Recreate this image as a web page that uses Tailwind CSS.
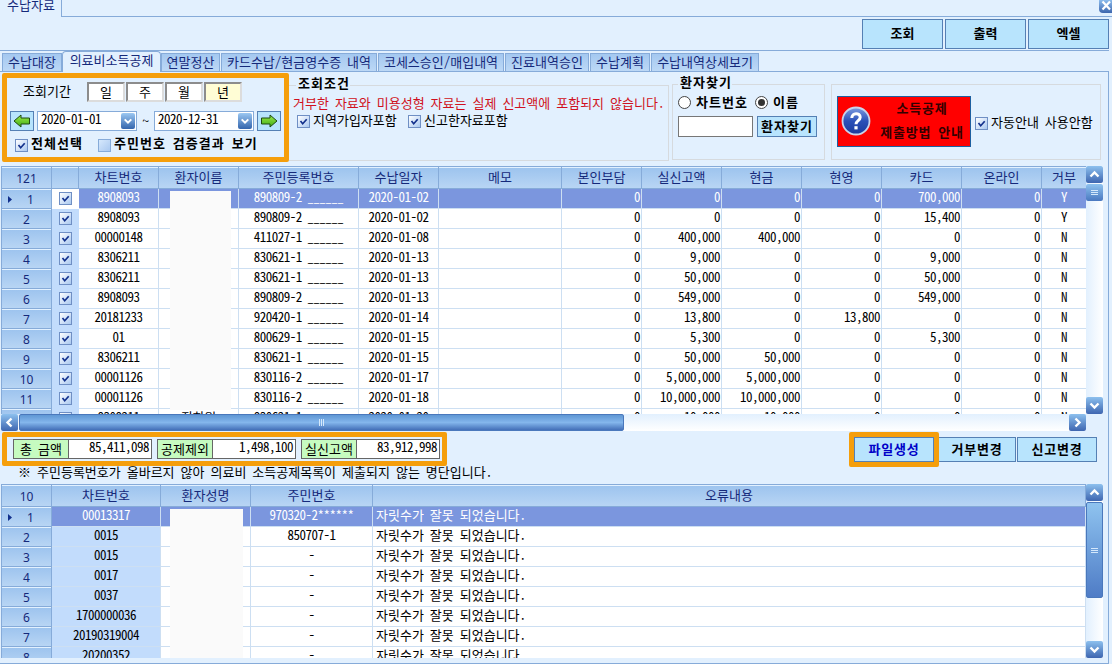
<!DOCTYPE html>
<html lang="ko">
<head>
  <meta charset="UTF-8" />
  <meta name="viewport" content="width=device-width, initial-scale=1.0" />
  <title>수납자료</title>
  <script src="https://cdn.jsdelivr.net/npm/@tailwindcss/browser@4"></script>
</head>
<body class="w-[1112px] h-[664px] overflow-hidden bg-[#e2f0fe] text-black text-[13px] leading-4 whitespace-nowrap [word-spacing:-0.5px] font-['Noto_Sans_CJK_KR',sans-serif] [font-feature-settings:'hwid']">

  <!-- icons -->
  <svg class="absolute w-0 h-0">
    <defs>
      <linearGradient id="arrowFill" x1="0" y1="0" x2="0" y2="1">
        <stop offset="0" stop-color="#9bea4a" /><stop offset="1" stop-color="#3fae12" />
      </linearGradient>
      <linearGradient id="helpFill" x1="0" y1="0" x2="0" y2="1">
        <stop offset="0" stop-color="#7d9ce0" /><stop offset=".5" stop-color="#2b50b8" /><stop offset="1" stop-color="#1b3a9c" />
      </linearGradient>
    </defs>
    <symbol id="check" viewBox="0 0 13 13"><path d="M3.5 6 L5.7 8.7 L9.7 4.3" fill="none" stroke="#12308c" stroke-width="1.7" /></symbol>
    <symbol id="up" viewBox="0 0 17 17"><path d="M4.5 10.5 L8.5 6.5 L12.5 10.5" fill="none" stroke="#fff" stroke-width="2.4" /></symbol>
    <symbol id="down" viewBox="0 0 17 17"><path d="M4.5 6.5 L8.5 10.5 L12.5 6.5" fill="none" stroke="#fff" stroke-width="2.4" /></symbol>
    <symbol id="left" viewBox="0 0 17 17"><path d="M10.5 4.5 L6.5 8.5 L10.5 12.5" fill="none" stroke="#fff" stroke-width="2.4" /></symbol>
    <symbol id="right" viewBox="0 0 17 17"><path d="M6.5 4.5 L10.5 8.5 L6.5 12.5" fill="none" stroke="#fff" stroke-width="2.4" /></symbol>
    <symbol id="arrow" viewBox="0 0 18 14"><path d="M1 7 L8 1 V4 H16.5 V10 H8 V13 Z" fill="url(#arrowFill)" stroke="#1d4a12" /></symbol>
  </svg>

  <!-- window tab -->
  <div class="flex h-[17px] relative">
    <div class="w-[62px] h-[17px] border-r border-[#86abd9] pl-[7px] text-[#15297a]"><div class="-mt-[3px]">수납자료</div></div>
    <div class="flex-1 border-b border-[#86abd9]"></div>
    <div class="absolute left-[1099px] top-0 w-[13px] h-[13px] rounded-bl-sm bg-gradient-to-b from-[#8dbcec] to-[#3e66ae]">
      <svg class="w-[13px] h-[13px]" viewBox="0 0 13 13"><path d="M3.5 1.5 L11 9.5 M11 1.5 L3.5 9.5" stroke="#fff" stroke-width="2.2" /></svg>
    </div>
  </div>

  <!-- toolbar -->
  <div class="flex justify-end gap-[2px] w-[1109px] h-[34px] pt-[2px] border-b border-[#86abd9] font-bold">
    <button class="w-[81px] h-[30px] pb-[2px] border border-[#5580b4] bg-[#b8e4fd]">조회</button>
    <button class="w-[81px] h-[30px] pb-[2px] border border-[#5580b4] bg-[#b8e4fd]">출력</button>
    <button class="w-[81px] h-[30px] pb-[2px] border border-[#5580b4] bg-[#b8e4fd]">엑셀</button>
  </div>

  <!-- page tabs -->
  <div class="flex items-end gap-px w-[1109px] h-[21px] pl-[2px] border-b border-[#86abd9] text-[#15297a]">
    <div class="w-[60px] h-[18px] -mr-px pb-[2px] flex items-center justify-center border border-b-0 border-[#86abd9] bg-gradient-to-b from-[#a4c8f0] to-[#bcd8f6]">수납대장</div>
    <div class="w-[99px] h-[21px] -mb-px -mr-px relative flex items-center justify-center rounded-t border border-b-0 border-[#86abd9] bg-[#e2f0fe] pb-[4px]">의료비소득공제</div>
    <div class="w-[59px] h-[18px] pb-[2px] flex items-center justify-center border border-b-0 border-[#86abd9] bg-gradient-to-b from-[#a4c8f0] to-[#bcd8f6]">연말정산</div>
    <div class="w-[156px] h-[18px] pb-[2px] flex items-center justify-center border border-b-0 border-[#86abd9] bg-gradient-to-b from-[#a4c8f0] to-[#bcd8f6]">카드수납/현금영수증 내역</div>
    <div class="w-[126px] h-[18px] pb-[2px] flex items-center justify-center border border-b-0 border-[#86abd9] bg-gradient-to-b from-[#a4c8f0] to-[#bcd8f6]">코세스승인/매입내역</div>
    <div class="w-[84px] h-[18px] pb-[2px] flex items-center justify-center border border-b-0 border-[#86abd9] bg-gradient-to-b from-[#a4c8f0] to-[#bcd8f6]">진료내역승인</div>
    <div class="w-[60px] h-[18px] pb-[2px] flex items-center justify-center border border-b-0 border-[#86abd9] bg-gradient-to-b from-[#a4c8f0] to-[#bcd8f6]">수납계획</div>
    <div class="w-[108px] h-[18px] pb-[2px] flex items-center justify-center border border-b-0 border-[#86abd9] bg-gradient-to-b from-[#a4c8f0] to-[#bcd8f6]">수납내역상세보기</div>
  </div>

  <div class="w-[1109px] h-[592px] border-r border-b border-[#86abd9]">
    <!-- search filters -->
    <div class="flex h-[94px] pt-px pl-[2px]">
      <div class="w-[287px] h-[89px] border-[5px] border-[#f59e0b] rounded-[2px]">
        <div class="flex items-center h-[28px] pl-4">
          <div class="w-[64px] pb-[2px]">조회기간</div>
          <div class="flex gap-px">
            <div class="w-[38px] h-[20px] flex items-center justify-center bg-white border-2 border-[#dcdcdc] border-t-[#8c8c8c] border-l-[#8c8c8c]">일</div>
            <div class="w-[38px] h-[20px] flex items-center justify-center bg-white border-2 border-[#dcdcdc] border-t-[#8c8c8c] border-l-[#8c8c8c]">주</div>
            <div class="w-[38px] h-[20px] flex items-center justify-center bg-white border-2 border-[#dcdcdc] border-t-[#8c8c8c] border-l-[#8c8c8c]">월</div>
            <div class="w-[38px] h-[20px] flex items-center justify-center bg-[#fffdd5] border-2 border-[#dcdcdc] border-t-[#8c8c8c] border-l-[#8c8c8c]">년</div>
          </div>
        </div>
        <div class="flex items-center h-[20px] mt-[5px] pl-[3px] tracking-[-0.5px]">
          <div class="w-[24px] h-[20px] flex items-center justify-center border border-[#5580b4] bg-[#b8e4fd]"><svg class="w-[18px] h-[14px]"><use href="#arrow" /></svg></div>
          <div class="w-[100px] h-[20px] ml-[3px] flex items-center justify-between border border-[#86abd9] bg-white pl-[3px] pr-px"><span class="-mt-1">2020-01-01</span><span class="w-[14px] h-[16px] rounded-[2px] bg-gradient-to-b from-[#9cc8f2] to-[#3465ac]"><svg class="w-[14px] h-[16px]"><use href="#down" /></svg></span></div>
          <div class="w-[17px] text-center">~</div>
          <div class="w-[100px] h-[20px] flex items-center justify-between border border-[#86abd9] bg-white pl-[3px] pr-px"><span class="-mt-1">2020-12-31</span><span class="w-[14px] h-[16px] rounded-[2px] bg-gradient-to-b from-[#9cc8f2] to-[#3465ac]"><svg class="w-[14px] h-[16px]"><use href="#down" /></svg></span></div>
          <div class="w-[24px] h-[20px] ml-[3px] flex items-center justify-center border border-[#5580b4] bg-[#b8e4fd]"><svg class="w-[18px] h-[14px] -scale-x-100"><use href="#arrow" /></svg></div>
        </div>
        <div class="flex items-center h-[20px] mt-[2px] pl-2 font-bold tracking-[1px]">
          <span class="w-[13px] h-[13px] mt-1 border border-[#6f8fc4] bg-gradient-to-br from-white to-[#a9c8f0]"><svg class="w-[13px] h-[13px] -m-px max-w-none"><use href="#check" /></svg></span>
          <span class="w-[67px] ml-[3px]">전체선택</span>
          <span class="w-[13px] h-[13px] mt-1 border border-[#86abd9] bg-gradient-to-br from-[#d6e8fc] to-[#a9c8f0]"></span>
          <span class="ml-[3px]">주민번호 검증결과 보기</span>
        </div>
      </div>

      <div class="relative w-[380px] h-[76px] mt-[12px] border border-l-0 border-[#d6dade]">
        <div class="absolute left-[7px] -top-[11px] pl-[2px] bg-[#e2f0fe] font-bold tracking-[1px]">조회조건</div>
        <div class="mt-[9px] pl-1 text-[#d01020]">거부한 자료와 미용성형 자료는 실제 신고액에 포함되지 않습니다.</div>
        <div class="flex items-center mt-px pl-2">
          <span class="w-[13px] h-[13px] mt-[2px] border border-[#6f8fc4] bg-gradient-to-br from-white to-[#a9c8f0]"><svg class="w-[13px] h-[13px] -m-px max-w-none"><use href="#check" /></svg></span>
          <span class="w-[95px] ml-[3px]">지역가입자포함</span>
          <span class="w-[13px] h-[13px] mt-[2px] border border-[#6f8fc4] bg-gradient-to-br from-white to-[#a9c8f0]"><svg class="w-[13px] h-[13px] -m-px max-w-none"><use href="#check" /></svg></span>
          <span class="ml-[3px]">신고한자료포함</span>
        </div>
      </div>

      <div class="relative w-[153px] h-[76px] mt-[11px] ml-[3px] border border-[#d6dade] font-bold tracking-[1px]">
        <div class="absolute left-[5px] -top-[11px] pl-[2px] bg-[#e2f0fe]">환자찾기</div>
        <div class="flex items-center mt-[9px] pl-[5px]">
          <span class="w-[13px] h-[13px] rounded-full border border-[#444] bg-white"></span>
          <span class="w-[59px] ml-[5px]">차트번호</span>
          <span class="w-[13px] h-[13px] rounded-full border border-[#444] bg-white flex items-center justify-center"><span class="w-[7px] h-[7px] rounded-full bg-[#333]"></span></span>
          <span class="ml-[5px]">이름</span>
        </div>
        <div class="flex gap-1 mt-[6px] pl-[5px]">
          <div class="w-[75px] h-[21px] border border-[#777] bg-white"></div>
          <button class="w-[60px] h-[21px] pb-px border border-[#5580b4] bg-[#b8e4fd] flex items-center justify-center">환자찾기</button>
        </div>
      </div>

      <div class="flex items-center w-[270px] h-[76px] mt-[11px] ml-[6px] pl-[5px] border border-[#d6dade]">
        <div class="flex items-center w-[134px] h-[51px] -mt-[2px] border border-[#1d5fa0] bg-[#f00] pl-[3px]">
          <svg class="w-[30px] h-[30px] shrink-0" viewBox="0 0 30 30">
            <circle cx="15" cy="15" r="13.5" fill="url(#helpFill)" stroke="#c9d3ea" stroke-width="1.8" />
            <path d="M10.8 12 C10.8 6.3 19.2 6.3 19.2 11.3 C19.2 14.6 15 14.6 15 18.2" fill="none" stroke="#fff" stroke-width="3" />
            <rect x="13.4" y="20.2" width="3.2" height="3.2" fill="#fff" />
          </svg>
          <div class="flex-1 pl-[3px] pb-[2px] text-center font-bold tracking-[0.8px] leading-[24px] text-[#300]">소득공제<br />제출방법 안내</div>
        </div>
        <span class="w-[13px] h-[13px] ml-1 mt-[2px] border border-[#6f8fc4] bg-gradient-to-br from-white to-[#a9c8f0]"><svg class="w-[13px] h-[13px] -m-px max-w-none"><use href="#check" /></svg></span>
        <span class="ml-[3px]">자동안내 사용안함</span>
      </div>
    </div>

    <!-- payment grid -->
    <div class="flex h-[248px] pl-px">
      <div id="payGrid" class="relative w-[1085px] h-[248px] overflow-hidden bg-white border-l border-t border-[#86abd9]">
        <div class="absolute left-[168px] top-[24px] w-[61px] h-[219px] bg-[#fafafa]"></div>
      </div>
      <div class="w-[17px] flex flex-col bg-gradient-to-r from-[#e2f0fe] to-white">
        <div class="h-[17px] rounded-[2px] bg-gradient-to-b from-[#8dc0ee] to-[#3f66b0]"><svg class="w-[17px] h-[17px]"><use href="#up" /></svg></div>
        <div class="h-[17px] mt-px rounded-[2px] bg-gradient-to-b from-[#8fc3ef] to-[#4a78c0] flex flex-col items-center justify-center gap-px">
          <i class="w-[7px] h-px bg-[#d5e8fb]"></i><i class="w-[7px] h-px bg-[#d5e8fb]"></i><i class="w-[7px] h-px bg-[#d5e8fb]"></i>
        </div>
        <div class="h-[17px] mt-auto rounded-[2px] bg-gradient-to-b from-[#8dc0ee] to-[#3f66b0]"><svg class="w-[17px] h-[17px]"><use href="#down" /></svg></div>
      </div>
    </div>
    <div class="flex w-[1085px] h-[17px] ml-px bg-gradient-to-b from-[#e2f0fe] to-white">
      <div class="w-[17px] rounded-[2px] bg-gradient-to-b from-[#8dc0ee] to-[#3f66b0]"><svg class="w-[17px] h-[17px]"><use href="#left" /></svg></div>
      <div class="w-[605px] ml-px rounded-[2px] border border-[#4a78bc] bg-gradient-to-b from-[#5f97d4] via-[#84b6ec] to-[#4470b8] flex items-center justify-center gap-px">
        <i class="w-px h-[7px] bg-[#d5e8fb]"></i><i class="w-px h-[7px] bg-[#d5e8fb]"></i><i class="w-px h-[7px] bg-[#d5e8fb]"></i>
      </div>
      <div class="w-[17px] ml-auto rounded-[2px] bg-gradient-to-b from-[#8dc0ee] to-[#3f66b0]"><svg class="w-[17px] h-[17px]"><use href="#right" /></svg></div>
    </div>

    <!-- totals and actions -->
    <div class="flex h-[36px] pt-px pl-[2px]">
      <div class="flex gap-[5px] w-[445px] h-[34px] pt-[2px] pl-[6px] border-[5px] border-[#f59e0b] rounded-[2px]">
        <div class="flex w-[139px] h-[20px] border border-[#666]"><div class="w-[55px] flex items-center justify-center bg-[#c6fbc0] border-r border-[#666]">총 금액</div><div class="flex-1 text-right pr-[2px] bg-white tracking-[-0.5px] leading-[14px]">85,411,098</div></div>
        <div class="flex w-[139px] h-[20px] border border-[#666]"><div class="w-[55px] flex items-center justify-center bg-[#c6fbc0] border-r border-[#666]">공제제외</div><div class="flex-1 text-right pr-[2px] bg-white tracking-[-0.5px] leading-[14px]">1,498,100</div></div>
        <div class="flex w-[139px] h-[20px] border border-[#666]"><div class="w-[55px] flex items-center justify-center bg-[#c6fbc0] border-r border-[#666]">실신고액</div><div class="flex-1 text-right pr-[2px] bg-white tracking-[-0.5px] leading-[14px]">83,912,998</div></div>
      </div>
      <div class="flex ml-[402px] font-bold tracking-[0.8px]">
        <div class="w-[90px] h-[35px] border-[5px] border-[#f59e0b] rounded-[2px]"><button class="w-[80px] h-[25px] pb-[2px] border border-[#5580b4] bg-[#b8e4fd] text-[#0000c8]">파일생성</button></div>
        <button class="w-[77px] h-[25px] mt-[5px] pb-[2px] border border-l-0 border-[#5580b4] bg-[#b8e4fd]">거부변경</button>
        <button class="w-[80px] h-[25px] mt-[5px] ml-px pb-[2px] border border-[#5580b4] bg-[#b8e4fd]">신고변경</button>
      </div>
    </div>
    <div class="h-[17px] pl-[18px] -mt-[3px] mb-[3px]">※ 주민등록번호가 올바르지 않아 의료비 소득공제목록이 제출되지 않는 명단입니다.</div>

    <!-- error grid -->
    <div class="flex h-[174px] pl-px">
      <div id="errGrid" class="relative w-[1085px] h-[174px] overflow-hidden bg-white border-l border-t border-[#86abd9]">
        <div class="absolute left-[168px] top-[24px] w-[73px] h-[150px] bg-[#fafafa]"></div>
      </div>
      <div class="w-[17px] flex flex-col bg-gradient-to-r from-[#e2f0fe] to-white">
        <div class="h-[17px] rounded-[2px] bg-gradient-to-b from-[#8dc0ee] to-[#3f66b0]"><svg class="w-[17px] h-[17px]"><use href="#up" /></svg></div>
        <div class="h-[96px] mt-px rounded-[2px] border border-[#4a78bc] bg-gradient-to-b from-[#8fc3ef] to-[#4f7cc6] flex flex-col items-center justify-center gap-px">
          <i class="w-[7px] h-px bg-[#d5e8fb]"></i><i class="w-[7px] h-px bg-[#d5e8fb]"></i><i class="w-[7px] h-px bg-[#d5e8fb]"></i>
        </div>
        <div class="h-[17px] mt-auto rounded-[2px] bg-gradient-to-b from-[#8dc0ee] to-[#3f66b0]"><svg class="w-[17px] h-[17px]"><use href="#down" /></svg></div>
      </div>
    </div>
  </div>

  <script>
    const payCols = [50, 27, 80, 80, 120, 80, 123, 80, 80, 80, 80, 80, 80, 45];
    const payHead = ['121', '', '차트번호', '환자이름', '주민등록번호', '수납일자', '메모', '본인부담', '실신고액', '현금', '현영', '카드', '온라인', '거부'];
    const payRows = [
      ['8908093', '890809-2', '2020-01-02', '0', '0', '0', '0', '700,000', '0', 'Y'],
      ['8908093', '890809-2', '2020-01-02', '0', '0', '0', '0', '15,400', '0', 'Y'],
      ['00000148', '411027-1', '2020-01-08', '0', '400,000', '400,000', '0', '0', '0', 'N'],
      ['8306211', '830621-1', '2020-01-13', '0', '9,000', '0', '0', '9,000', '0', 'N'],
      ['8306211', '830621-1', '2020-01-13', '0', '50,000', '0', '0', '50,000', '0', 'N'],
      ['8908093', '890809-2', '2020-01-13', '0', '549,000', '0', '0', '549,000', '0', 'N'],
      ['20181233', '920420-1', '2020-01-14', '0', '13,800', '0', '13,800', '0', '0', 'N'],
      ['01', '800629-1', '2020-01-15', '0', '5,300', '0', '0', '5,300', '0', 'N'],
      ['8306211', '830621-1', '2020-01-15', '0', '50,000', '50,000', '0', '0', '0', 'N'],
      ['00001126', '830116-2', '2020-01-17', '0', '5,000,000', '5,000,000', '0', '0', '0', 'N'],
      ['00001126', '830116-2', '2020-01-18', '0', '10,000,000', '10,000,000', '0', '0', '0', 'N'],
      ['8308211', '830621-1', '2020-01-20', '0', '10,000', '10,000', '0', '0', '0', 'N'],
    ];
    const errCols = [50, 109, 90, 122, 713];
    const errHead = ['10', '차트번호', '환자성명', '주민번호', '오류내용'];
    const errRows = [['00013317', '970320-2******'], ['0015', '850707-1'], ['0015', '-'], ['0017', '-'], ['0037', '-'], ['1700000036', '-'], ['20190319004', '-'], ['20200352', '-']];

    const check = `<span class="w-[13px] h-[13px] border border-[#6f8fc4] bg-gradient-to-br from-white to-[#a9c8f0]"><svg class="w-[13px] h-[13px] -m-px max-w-none"><use href="#check" /></svg></span>`;

    function cell(width, cls, content) {
      return `<div class="shrink-0 flex items-center ${cls}" style="width:${width}px">${content}</div>`;
    }

    function header(cols, labels) {
      return `<div class="flex h-[22px] text-[#15297a]">` + labels.map((t, i) =>
        cell(cols[i], `justify-center border-r border-b border-[#86abd9] bg-gradient-to-b from-[#9cc3ee] to-[#b8d5f4] shadow-[inset_0_1px_#e2f1ff] ${i ? 'pb-[2px]' : "font-['Noto_Sans'] text-[12px] pt-[2px]"}`, t)).join('') + `</div>`;
    }

    function rowNumber(i) {
      const mark = i ? '' : `<svg class="w-[4px] h-[7px] mr-[15px] -ml-[11px]" viewBox="0 0 4 7"><path d="M0 0 L4 3.5 L0 7 Z" fill="#12308c" /></svg>`;
      return cell(50, "justify-center border-r border-b border-[#86abd9] bg-gradient-to-b from-[#9cc3ee] to-[#b8d5f4] shadow-[inset_0_1px_#e2f1ff] text-[#15297a] font-['Noto_Sans'] text-[12px] pt-[2px] tracking-normal", mark + (i + 1));
    }

    payGrid.insertAdjacentHTML('afterbegin', header(payCols, payHead) + payRows.map((r, i) => {
      const base = i ? 'border-r border-b border-[#cddff2] pb-[4px]' : 'border-r border-b border-[#cddff2] bg-[#7b96de] text-white pb-[4px]';
      const values = [r[0], i == 11 ? '장하원' : '', r[1] + ' ______', r[2], '', ...r.slice(3)];
      return `<div class="flex h-[20px] tracking-[-0.5px]">` + rowNumber(i)
        + cell(27, 'justify-center pb-px ' + (i ? 'bg-[#c2dcfc]' : 'bg-white'), check)
        + values.map((v, j) => cell(payCols[j + 2], base + (j > 4 && j < 11 ? ' justify-end pr-px' : ' justify-center'), v)).join('') + `</div>`;
    }).join(''));

    errGrid.insertAdjacentHTML('afterbegin', header(errCols, errHead) + errRows.map((r, i) => {
      const base = i ? 'border-r border-b border-[#cddff2] pb-[4px] ' : 'border-r border-b border-[#cddff2] bg-[#7b96de] text-white pb-[4px] ';
      return `<div class="flex h-[20px]">` + rowNumber(i)
        + cell(109, base + 'justify-center tracking-[-0.5px] ' + (i ? 'bg-[#c2dcfc]' : ''), r[0])
        + cell(90, base, '')
        + cell(122, base + 'justify-center tracking-[-0.5px]', r[1])
        + cell(713, base + 'pl-[3px]', '자릿수가 잘못 되었습니다.') + `</div>`;
    }).join(''));
  </script>
</body>
</html>
